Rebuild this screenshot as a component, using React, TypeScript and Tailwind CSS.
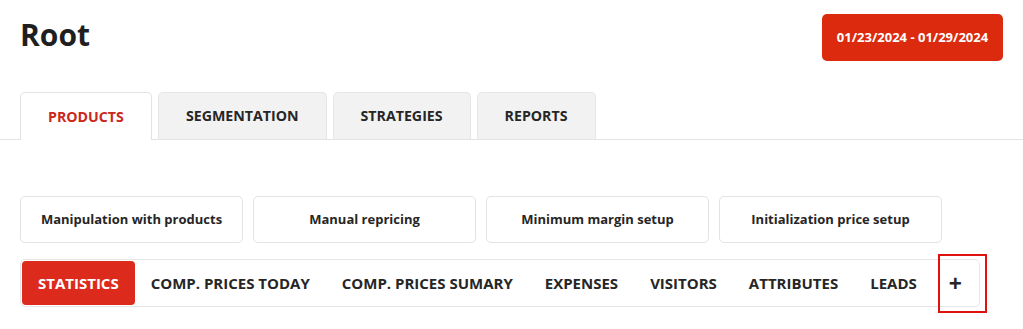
import React from 'react';

const mainTabs = ['PRODUCTS', 'SEGMENTATION', 'STRATEGIES', 'REPORTS'];
const actions = ['Manipulation with products', 'Manual repricing', 'Minimum margin setup', 'Initialization price setup'];
const subTabs = ['STATISTICS', 'COMP. PRICES TODAY', 'COMP. PRICES SUMARY', 'EXPENSES', 'VISITORS', 'ATTRIBUTES', 'LEADS'];

const App: React.FC = () => {
  return (
    <div className="w-[1023px] h-[329px] bg-white overflow-hidden font-['Open_Sans',sans-serif] text-[#262626]">
      {/* Header */}
      <div className="flex items-start justify-between px-5 pt-[14px]">
        <h1 className="text-[30px] font-bold leading-[40px] mt-[1px] text-[#1f1f1f]">Root</h1>
        <button className="w-[181px] h-[47px] rounded-[5px] bg-[#dc2a0e] text-white text-[13px] font-bold">
          01/23/2024 - 01/29/2024
        </button>
      </div>

      {/* Main tabs */}
      <div className="mt-[31px] flex gap-[6px] px-5 border-b border-[#e3e3e3]">
        {mainTabs.map((tab, i) => (
          <div
            key={tab}
            className={
              i === 0
                ? 'h-[48px] -mb-px px-[27px] flex items-center border border-b-0 border-[#e3e3e3] rounded-t-[5px] bg-white text-[14.2px] font-bold text-[#c9281b]'
                : 'h-[47px] px-[27px] flex items-center border border-b-0 border-[#e6e6e6] rounded-t-[5px] bg-[#f2f2f2] text-[14.2px] font-bold text-[#262626]'
            }
          >
            {tab}
          </div>
        ))}
      </div>

      {/* Action buttons */}
      <div className="mt-[56px] flex gap-[10px] px-5">
        {actions.map((a) => (
          <button
            key={a}
            className="w-[223px] h-[47px] rounded-[5px] border border-[#e3e3e3] bg-white text-[13px] font-bold text-[#262626]"
          >
            {a}
          </button>
        ))}
      </div>

      {/* Sub tabs */}
      <div className="mt-[16px] ml-5 w-[960px] h-[48px] p-px flex items-stretch border border-[#e6e6e6] rounded-[5px] relative">
        {subTabs.map((t, i) => (
          <div
            key={t}
            className={
              i === 0
                ? 'px-4 flex items-center rounded-[4px] bg-[#dc2a1c] text-white text-[15px] font-bold'
                : 'px-4 flex items-center text-[15px] font-bold text-[#262626]'
            }
          >
            {t}
          </div>
        ))}
        <div className="px-4 flex items-center text-[23px] font-bold text-[#262626] leading-none">+</div>
        <div className="absolute left-[917px] top-[-6px] w-[49px] h-[59px] border-2 border-[#e0120f]" />
      </div>
    </div>
  );
};

export default App;
